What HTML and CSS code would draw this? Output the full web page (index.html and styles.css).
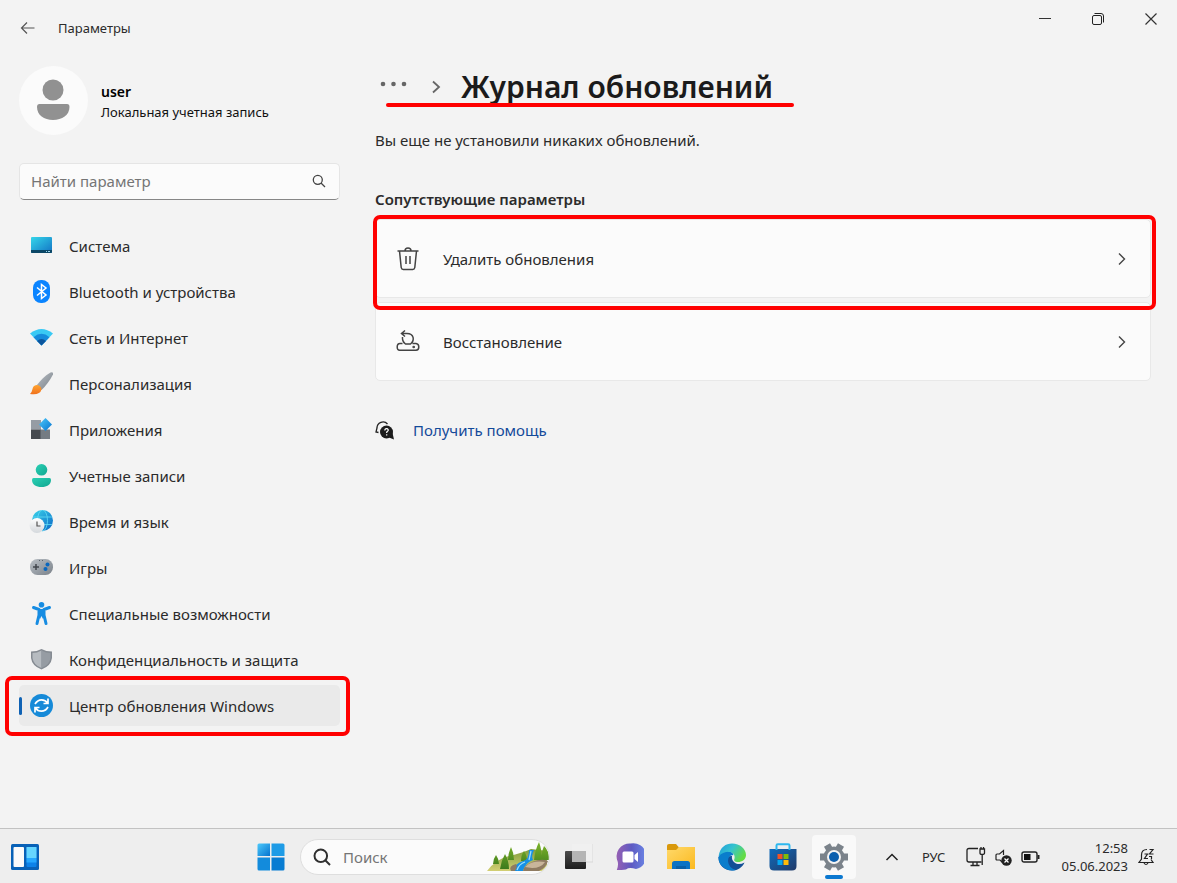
FILE: index.html
```html
<!DOCTYPE html>
<html lang="ru">
<head>
<meta charset="utf-8">
<meta name="viewport" content="width=device-width, initial-scale=1">
<title>Параметры</title>
<link rel="stylesheet" href="styles.css">
</head>
<body>
<svg class="defs" aria-hidden="true">
  <defs>
    <linearGradient id="screen" x1="0" y1="0" x2="1" y2="1"><stop offset="0" stop-color="#35d6ea"/><stop offset="1" stop-color="#1273c4"/></linearGradient>
    <linearGradient id="metal" x1="0" y1="0" x2="1" y2="1"><stop offset="0" stop-color="#b9bfc5"/><stop offset="1" stop-color="#7b828a"/></linearGradient>
    <linearGradient id="orange" x1="0" y1="0" x2="0" y2="1"><stop offset="0" stop-color="#ffa532"/><stop offset="1" stop-color="#f0701c"/></linearGradient>
    <linearGradient id="teal" x1="0" y1="0" x2="1" y2="1"><stop offset="0" stop-color="#2bd0b4"/><stop offset="1" stop-color="#10a791"/></linearGradient>
    <linearGradient id="sky" x1="0" y1="0" x2="1" y2="1"><stop offset="0" stop-color="#4cc9fb"/><stop offset="1" stop-color="#0573cf"/></linearGradient>
    <linearGradient id="globe" x1="0" y1="0" x2="1" y2="1"><stop offset="0" stop-color="#3bd5ea"/><stop offset="1" stop-color="#0a66c6"/></linearGradient>
    <linearGradient id="white" x1="0" y1="0" x2="0" y2="1"><stop offset="0" stop-color="#ffffff"/><stop offset="1" stop-color="#d4d8dc"/></linearGradient>
    <linearGradient id="dark" x1="0" y1="0" x2="0" y2="1"><stop offset="0" stop-color="#4b4b4b"/><stop offset="1" stop-color="#1e1e1e"/></linearGradient>
    <linearGradient id="violet" x1="0" y1="0" x2="1" y2="0"><stop offset="0" stop-color="#9660b4"/><stop offset=".5" stop-color="#5e5ac2"/><stop offset="1" stop-color="#6a86e6"/></linearGradient>
    <linearGradient id="yellow" x1="0" y1="0" x2="1" y2="1"><stop offset="0" stop-color="#ffd96b"/><stop offset="1" stop-color="#fbb91f"/></linearGradient>
    <linearGradient id="edge-top" x1="0" y1="0" x2="1" y2=".5"><stop offset="0" stop-color="#1f9bdc"/><stop offset=".5" stop-color="#35c3cf"/><stop offset="1" stop-color="#64dc45"/></linearGradient>
    <linearGradient id="bag" x1="0" y1="0" x2="1" y2="1"><stop offset="0" stop-color="#0f6cbd"/><stop offset="1" stop-color="#213a68"/></linearGradient>
    <linearGradient id="hill" x1="0" y1="0" x2="0" y2="1"><stop offset="0" stop-color="#7f9c3a"/><stop offset="1" stop-color="#d3cf74"/></linearGradient>
    <linearGradient id="tree" x1="0" y1="0" x2="0" y2="1"><stop offset="0" stop-color="#7fb52a"/><stop offset="1" stop-color="#3b7a1c"/></linearGradient>
  </defs>
</svg>
<div class="window">
  <header class="titlebar">
    <button class="back" aria-label="Назад"><svg width="16" height="14" viewBox="0 0 16 14"><path d="M14.500 7H2M7 1.500L1.500 7L7 12.500" fill="none" stroke="#555" stroke-width="1.200"/></svg></button>
    <span class="app-name">Параметры</span>
    <div class="controls">
      <button aria-label="Свернуть"><svg width="14" height="14"><path d="M1 6.500H13" stroke="#333"/></svg></button>
      <button aria-label="Восстановить окно"><svg width="14" height="14" fill="none" stroke="#222"><rect x="1.500" y="3.500" width="9" height="9" rx="1.500"/><path d="M3.500 1.500H10Q12.500 1.500 12.500 4V10.500"/></svg></button>
      <button aria-label="Закрыть"><svg width="14" height="14"><path d="M1.500 1.500L12.500 12.500M12.500 1.500L1.500 12.500" stroke="#333" stroke-width="1.200"/></svg></button>
    </div>
  </header>
  <div class="layout">
    <aside class="sidebar">
      <div class="account">
        <svg class="avatar" width="69" height="69" viewBox="0 0 69 69"><circle cx="34.500" cy="34.500" r="34.500" fill="#fbfbfb"/><circle cx="34" cy="24" r="10.500" fill="#919191"/><path d="M20.500 38H48Q50.500 38 50.500 41C50.500 49 43 54 34 54S18 49 18 41Q18 38 20.500 38Z" fill="#919191"/></svg>
        <div><div class="user-name">user</div><div class="user-type">Локальная учетная запись</div></div>
      </div>
      <div class="search">
        <input type="text" placeholder="Найти параметр" aria-label="Найти параметр">
        <svg width="14" height="14" viewBox="0 0 14 14" fill="none" stroke="#444" stroke-width="1.300"><circle cx="5.800" cy="5.800" r="4.500"/><path d="M9 9L13 13"/></svg>
      </div>
      <nav class="nav">
        <a href="#"><svg width="24" height="24"><rect x="2" y="3" width="21" height="16" rx="1" fill="url(#screen)"/><path d="M2 16H23V18Q23 19 22 19H3Q2 19 2 18Z" fill="#0b4766"/><path d="M17 17.500H18M19 17.500H21" stroke="#9ed7ee"/></svg>Система</a>
        <a href="#"><svg width="24" height="24"><rect x="4" y="0" width="17" height="23" rx="8" fill="#0a84ff"/><path d="M8 7.500L17 15L12.500 18.500V4.500L17 8L8 15.500" fill="none" stroke="#fff" stroke-width="1.500"/></svg>Bluetooth и устройства</a>
        <a href="#"><svg width="24" height="24"><path d="M1 7.500Q12.500 -1.500 24 7.500L12.500 19.500Z" fill="#39c9f4"/><path d="M4.500 11.200Q12.500 4.500 20.500 11.200L12.500 19.500Z" fill="#158bdc"/><path d="M8 15Q12.500 11 17 15L12.500 19.500Z" fill="#0b559d"/></svg>Сеть и Интернет</a>
        <a href="#"><svg width="24" height="24"><path d="M7.500 13.500Q15 4 21.500 .5Q24.500 -.5 24 2.500Q19 12 12.500 18Z" fill="url(#metal)"/><path d="M7.500 13Q12 13 12.500 17.500Q11 23.500 1 22Q3 20 3.500 17Q4 13.500 7.500 13Z" fill="url(#orange)"/></svg>Персонализация</a>
        <a href="#"><svg width="24" height="24"><rect x="2" y="2" width="10" height="9.500" fill="#969ca4"/><rect x="2" y="11.500" width="10" height="9.500" fill="#45494e"/><rect x="11.500" y="11.500" width="9.500" height="9.500" fill="#757c83"/><path d="M16.500 0L23 6.500L16.500 13L10 6.500Z" fill="url(#sky)"/></svg>Приложения</a>
        <a href="#"><svg width="24" height="24"><circle cx="12.500" cy="5.800" r="5.800" fill="url(#teal)"/><path d="M4.500 14H20.500Q22 14 22 16C22 20.500 18 23 12.500 23S3 20.500 3 16Q3 14 4.500 14Z" fill="url(#teal)"/></svg>Учетные записи</a>
        <a href="#"><svg width="24" height="24"><circle cx="13.500" cy="10.500" r="10.500" fill="url(#globe)"/><g fill="none" stroke="#62dcf5" stroke-width=".8"><ellipse cx="13.500" cy="10.500" rx="5" ry="10.500"/><path d="M4 7H23M4 14.500H23"/></g><circle cx="8" cy="15.500" r="7.500" fill="url(#white)"/><path d="M8 11.500V16H11.500" fill="none" stroke="#555" stroke-width="1.200"/></svg>Время и язык</a>
        <a href="#"><svg width="24" height="24"><rect x="1" y="3" width="23" height="16" rx="7.500" fill="url(#metal)"/><path d="M4 11H10M7 8V14" stroke="#41474d" stroke-width="1.500"/><path d="M10 4.500H11M13 4.500H14" stroke="#59616a"/><circle cx="18.500" cy="8.500" r="2" fill="#0b67bd"/><circle cx="16.500" cy="13" r="2" fill="#0b67bd"/></svg>Игры</a>
        <a href="#"><svg width="24" height="24"><circle cx="12.500" cy="2.800" r="2.800" fill="#168ce2"/><path d="M4.500 5.500L10 7.500V13L8 21.500M20.500 5.500L15 7.500V13L17 21.500" fill="none" stroke="#168ce2" stroke-width="3" stroke-linecap="round" stroke-linejoin="round"/><path d="M9 7H16V14L14 17L12.500 14L11 17L9 14Z" fill="#168ce2"/></svg>Специальные возможности</a>
        <a href="#"><svg width="24" height="24"><path d="M12.500 1Q17 3.500 23 3.500V10Q22 18 12.500 21.500Q3 18 2 10V3.500Q8 3.500 12.500 1Z" fill="#858b92"/><path d="M12.500 2.500V20Q4.500 17 3.500 10V5Q8 5 12.500 2.500Z" fill="#b6bbc0"/><path d="M12.500 2.500V20Q20.500 17 21.500 10V5Q17 5 12.500 2.500Z" fill="#969ca3"/></svg>Конфиденциальность и защита</a>
        <a href="#" class="current" aria-current="page"><svg width="24" height="24"><circle cx="12.500" cy="11.500" r="11.500" fill="#168ad8"/><g fill="none" stroke="#fff" stroke-width="1.700"><path d="M6 10Q8.500 5.800 12.500 5.800T18.500 9M19 4.500V9.500H14.500M19 13Q16.500 17.200 12.500 17.200T6.500 14M6 18.500V13.500H10.500"/></g></svg>Центр обновления Windows</a>
      </nav>
    </aside>
    <main class="content">
      <div class="crumbs">
        <button class="more" aria-label="Другие разделы"><svg width="27" height="6" fill="#666"><circle cx="3" cy="3" r="2.300"/><circle cx="13.500" cy="3" r="2.300"/><circle cx="24" cy="3" r="2.300"/></svg></button>
        <svg class="crumb-sep" width="10" height="14"><path d="M2 1.500L8 7L2 12.500" fill="none" stroke="#666" stroke-width="1.800"/></svg>
        <h1>Журнал обновлений</h1>
      </div>
      <p class="status">Вы еще не установили никаких обновлений.</p>
      <h2>Сопутствующие параметры</h2>
      <div class="cards">
        <a href="#" class="card marked"><svg width="24" height="26" viewBox="0 0 24 26" fill="none" stroke="#444" stroke-width="1.500"><path d="M1.500 5H22.500M9 5Q9 2 12 2T15 5M3.500 5L5.200 21.500Q5.500 23.500 7.300 23.500H16.700Q18.500 23.500 18.800 21.500L20.500 5M10 10V18M14 10V18"/></svg><span>Удалить обновления</span><svg class="chevron" width="10" height="14"><path d="M2 1.500L7.500 7L2 12.500" fill="none" stroke="#444" stroke-width="1.400"/></svg></a>
        <a href="#" class="card"><svg width="24" height="26" viewBox="0 0 24 26" fill="none" stroke="#444" stroke-width="1.500"><path d="M6.500 14.500H4Q1.200 14.500 1.200 18T4 21.200H20Q22.800 21.200 22.800 18T20 14.500H16.500M9 1.500L5.500 4.500L9 7.500M5.500 4.500H11C18 4.500 19 11.500 14.500 15H9.500Q6 12.500 6.500 8"/><circle cx="17.700" cy="18" r=".6"/></svg><span>Восстановление</span><svg class="chevron" width="10" height="14"><path d="M2 1.500L7.500 7L2 12.500" fill="none" stroke="#444" stroke-width="1.400"/></svg></a>
      </div>
      <a href="#" class="help"><svg width="20" height="20"><path d="M3.500 12.500L1 12L2 8A6 6 0 0 1 12.500 4" fill="none" stroke="#222" stroke-width="1.300"/><circle cx="11.500" cy="12" r="6.500" fill="#1b1b1b"/><path d="M14 17.500L19 19.500L17.500 13Z" fill="#1b1b1b"/><path d="M9.800 10.500Q10 8.500 11.700 8.700Q13.600 9 13.200 10.600Q12.900 11.300 11.700 12V13M11.700 14.200V15.500" fill="none" stroke="#fff" stroke-width="1.200"/></svg><span>Получить помощь</span></a>
    </main>
  </div>
</div>
<footer class="taskbar">
  <div class="task-left"><button aria-label="Виджеты"><svg width="28" height="26"><rect width="28" height="26" rx="1.500" fill="#0861b7"/><rect x="2.500" y="3" width="10.500" height="20" rx="1" fill="#fafafa"/><rect x="15.500" y="3" width="10" height="20" rx="1" fill="#0c82e9"/><path d="M15.500 3H25.500V14H15.500Z" fill="#66d6ff"/><path d="M15.500 14H25.500V18.500H15.500Z" fill="#25a8ff"/></svg></button></div>
  <div class="task-center">
    <button class="start" aria-label="Пуск"><svg width="28" height="28" fill="url(#sky)"><path d="M2 .5H13V13H.5V2Q.5 .5 2 .5Z"/><path d="M14.500 .5H26Q27.500 .5 27.500 2V13H14.500Z" fill="#1e9be6"/><path d="M.5 14.500H13V27.500H2Q.5 27.500 .5 26Z" fill="#138bdc"/><path d="M14.500 14.500H27.500V26Q27.500 27.500 26 27.500H14.500Z" fill="#087cd2"/></svg></button>
    <div class="task-search">
      <svg width="18" height="18" fill="none" stroke="#303030" stroke-width="2"><circle cx="7.800" cy="7.800" r="6.300"/><path d="M12 12L17 17"/></svg>
      <input type="text" placeholder="Поиск" aria-label="Поиск">
      <svg class="landscape" width="62" height="30"><path d="M0 29Q9 17 22 14T44 7L60 9V29Z" fill="url(#hill)"/><g fill="url(#tree)"><path d="M9 13Q12 17 12 22H6Q6 17 9 13ZM24 5Q27 11 27 18H21Q21 11 24 5ZM52 0Q55 8 55 18H47Q48 8 52 0ZM57 4Q62 8 62 18H55Q54 10 57 4ZM37 9Q40 13 40 19H34Q34 13 37 9ZM18 12Q22 19 22 27H13Q14 19 18 12Z"/></g><path d="M42 8H47Q44 14 46 18Q38 21 36 29H26Q27 22 36 19Q42 18 42 8Z" fill="#1690e6"/><path d="M44 9L42 18M38 20Q32 22 30 28" fill="none" stroke="#9adfff" stroke-width="1.300"/><path d="M36 29Q37 23 45 20Q55 16 61 19Q59 26 52 29ZM24 29Q21 24 29 22Q31 24 28 29Z" fill="#8f7b62"/><path d="M38 25Q45 18 58 20Q54 26 45 26Z" fill="#c9b59a"/></svg>
    </div>
    <button class="task-icon" aria-label="Представление задач"><svg width="28" height="28"><rect x="0" y="8" width="21" height="18" rx="1" fill="url(#dark)"/><rect x="7" y="1" width="21" height="18" fill="#f0f0f0"/><path d="M7 8H21V19H7Z" fill="#b5b5b5"/><path d="M21 19H28V1" fill="none" stroke="#d8d8d8"/></svg></button>
    <button class="task-icon" aria-label="Чат"><svg width="28" height="28"><path d="M14.500 .5A13 13 0 0 1 20 26Q13 24 10 26.500Q6 27 .8 27Q2.500 23 1.800 19A13 13 0 0 1 14.500 .5Z" fill="url(#violet)"/><rect x="6.500" y="8.500" width="11" height="11" rx="1.500" fill="#fff"/><path d="M18.500 12L22 9V19L18.500 16Z" fill="#fff"/></svg></button>
    <button class="task-icon" aria-label="Проводник"><svg width="28" height="28"><path d="M0 2.500Q0 1 2 1H9L12 4.500V10H0Z" fill="#d9980b"/><path d="M0 7H9L12 4H28V26H0Z" fill="url(#yellow)"/><path d="M5 26V20.500Q5 18 7.500 18H20.500Q23 18 23 20.500V26Z" fill="#0b73c4"/><path d="M9 26V23H19V26Z" fill="#0960a7"/></svg></button>
    <button class="task-icon" aria-label="Браузер"><svg width="28" height="28"><path d="M.5 14C.5 22 6 27.500 14 27.500C20 27.500 24.500 24 26.500 19.500Q22 22 18 20.500Q13 18 14 13Z" fill="#134f96"/><path d="M.5 14Q2 8 9 8Q15 8.500 15.500 12Q10 12 10 18Q10.500 25 18 27Q12 28.500 7 25.500Q0 21 .5 14Z" fill="#0a7dcc"/><path d="M.6 13C2 4 8 .5 14 .5C22 .5 28 6 28 12C28 16.500 24 19 20 19C16.500 19 15.500 17.500 16.500 15.500C18 10 10 5 .6 13Z" fill="url(#edge-top)"/></svg></button>
    <button class="task-icon" aria-label="Магазин"><svg width="28" height="28"><path d="M.5 6H27.500V23Q27.500 27.500 23 27.500H5Q.5 27.500 .5 23Z" fill="url(#bag)"/><path d="M7.500 7V2.500Q7.500 1.300 8.800 1.300H19.200Q20.500 1.300 20.500 2.500V7" fill="none" stroke="#2eb8ef" stroke-width="2"/><path d="M8.500 11H13.500V16H8.500Z" fill="#f15324"/><path d="M14.500 11H19.500V16H14.500Z" fill="#80bb0a"/><path d="M8.500 17H13.500V22H8.500Z" fill="#05a6f0"/><path d="M14.500 17H19.500V22H14.500Z" fill="#ffba08"/></svg></button>
    <button class="task-icon active" aria-label="Параметры"><svg width="28" height="28"><path d="M0 14H28M7 2L21 26M21 2L7 26" stroke="#7b838b" stroke-width="7"/><circle cx="14" cy="14" r="10.500" fill="#7b838b"/><circle cx="14" cy="14" r="7" fill="#f4f4f4"/><circle cx="14" cy="14" r="5" fill="#0b5fae"/></svg></button>
  </div>
  <div class="tray">
    <button class="tray-more" aria-label="Скрытые значки"><svg width="14" height="10"><path d="M1.500 8L7 2.500L12.500 8" fill="none" stroke="#222" stroke-width="1.500"/></svg></button>
    <span class="lang">РУС</span>
    <button class="status-icons" aria-label="Сеть, звук, батарея">
      <svg width="20" height="20" fill="none" stroke="#222" stroke-width="1.300"><path d="M12 1.500H3Q1 1.500 1 3.500V13Q1 15 3 15H15.500M7 15V18M11 15V18M4.500 18.500H13.500"/><path d="M14 2H18.500V6Q18.500 7.500 16.200 7.500T14 6ZM16.200 7.500V18M15 0V2M17.500 0V2"/></svg>
      <svg width="17" height="18"><path d="M8 15L5 12H2Q1 12 1 11V7Q1 6 2 6H4.500L8.500 2.500V7" fill="none" stroke="#222" stroke-width="1.200"/><circle cx="11.500" cy="12.500" r="5.200" fill="#222"/><path d="M9.500 10.500L13.500 14.500M13.500 10.500L9.500 14.500" stroke="#fff" stroke-width="1.200"/></svg>
      <svg width="19" height="14"><rect x="1" y="2" width="15" height="10" rx="2" fill="none" stroke="#222" stroke-width="1.400"/><rect x="3" y="4" width="6.500" height="6" fill="#111"/><path d="M17.500 5V9" stroke="#222" stroke-width="2"/></svg>
    </button>
    <time class="clock" datetime="2023-06-05T12:58"><span>12:58</span><span>05.06.2023</span></time>
    <button aria-label="Уведомления"><svg width="17" height="18" fill="none" stroke="#222" stroke-width="1.200"><path d="M9 1.500Q3.500 1.500 3.500 7V11L1 14.500H15L13 11.500M6 15Q8 18 10 15"/><path d="M6.500 6H9.500L6.500 10.500H10M11.500 1.500H15L11.500 6H15.500M11 8.500H13.500V11"/></svg></button>
  </div>
</footer>
</body>
</html>
```
FILE: styles.css
```css
* { box-sizing: border-box; }

body {
  margin: 0;
  min-height: 100vh;
  display: flex;
  flex-direction: column;
  background: #f3f3f3;
  color: #2b2b2b;
  font: 15px/20px "Noto Sans", "Open Sans", sans-serif;
}

svg { flex: none; display: block; }
button { border: 0; padding: 0; background: none; display: flex; align-items: center; justify-content: center; }
input { border: 0; padding: 0; outline: 0; background: none; font: inherit; min-width: 0; }
input::placeholder { color: #757575; opacity: 1; }
a { color: inherit; text-decoration: none; }
h1, h2, p { margin: 0; }

.defs { position: absolute; width: 0; height: 0; }

.window { flex: 1; }

/* Title bar */
.titlebar { display: flex; align-items: flex-start; height: 66px; padding-left: 20px; }
.back { width: 16px; height: 56px; }
.app-name { margin-left: 22px; font-size: 13px; line-height: 57px; }
.controls { display: flex; margin-left: auto; }
.controls button { width: 53px; height: 37px; }

.layout { display: flex; gap: 35px; padding: 0 26px 0 19px; }

/* Sidebar */
.sidebar { flex: none; width: 321px; }
.account { display: flex; align-items: center; gap: 13px; line-height: 21px; }
.user-name { padding-top: 2px; font-size: 14px; font-weight: 600; color: #000; }
.user-type { font-size: 13px; color: #111; }

.search {
  display: flex;
  align-items: center;
  height: 37px;
  margin-top: 28px;
  padding: 0 13px 2px 11px;
  background: #fbfbfb;
  border: 1px solid #e5e5e5;
  border-bottom-color: #868686;
  border-radius: 5px;
}
.search input { flex: 1; }

.nav { display: flex; flex-direction: column; gap: 5px; margin-top: 25px; }
.nav a { position: relative; display: flex; align-items: center; gap: 16px; height: 41px; padding: 0 10px; border-radius: 5px; }
.nav .current { background: #eaeaea; }
.nav .current::before { content: ""; position: absolute; left: 0; top: 12px; width: 3px; height: 18px; border-radius: 2px; background: #0f62b4; }
.nav .current::after { content: ""; position: absolute; inset: -9px -10px -10px -14px; border: 4px solid #f00; border-radius: 7px; }

/* Content */
.content { flex: 1; min-width: 0; }
.crumbs { position: relative; display: flex; align-items: center; width: max-content; height: 41px; padding-left: 5px; }
.crumbs::after { content: ""; position: absolute; left: 11px; right: -21px; bottom: 0; height: 4px; border-radius: 2px; background: #f00; }
.more { height: 36px; align-self: flex-start; }
.crumb-sep { margin: 0 20px 0 24px; }
h1 { font-size: 30px; line-height: 40px; font-weight: 600; color: #1b1b1b; }
.status { margin-top: 23px; }
h2 { margin-top: 39px; font-size: 15px; line-height: 20px; font-weight: 600; }

.cards { display: flex; flex-direction: column; gap: 4px; margin-top: 10px; }
.card {
  position: relative;
  display: flex;
  align-items: center;
  gap: 23px;
  height: 79px;
  padding: 0 23px 0 20px;
  background: #fbfbfb;
  border: 1px solid #e8e8e8;
  border-radius: 5px;
}
.card .chevron { margin-left: auto; }
.marked::after { content: ""; position: absolute; z-index: 1; inset: -5px -6px -13px -3px; border: 4px solid #f00; border-radius: 7px; }

.help { display: inline-flex; align-items: center; gap: 18px; margin-top: 39px; color: #134a9a; }

/* Taskbar */
.taskbar { display: flex; align-items: center; height: 55px; padding-top: 1px; background: #eee; border-top: 1px solid #c2c2c2; }
.task-left { flex: 1; padding-left: 11px; }
.task-center { display: flex; align-items: center; gap: 7px; }
.start { margin-right: 8px; }
.task-search { display: flex; align-items: center; width: 250px; height: 36px; padding-left: 12px; gap: 12px; background: #fbfbfb; border: 1px solid #dedede; border-radius: 18px; overflow: hidden; }
.task-search input { flex: 1; }
.task-icon { position: relative; width: 44px; height: 44px; border-radius: 4px; }
.active { background: #f9f9f9; }
.active::after { content: ""; position: absolute; left: 13px; bottom: 0; width: 18px; height: 4px; border-radius: 2px; background: #0b78d0; }

.tray { display: flex; align-items: center; width: 321px; padding: 0 22px 0 29px; }
.lang { margin-left: 23px; font-size: 13px; }
.status-icons { gap: 9px; margin-left: 21px; }
.clock { display: flex; flex-direction: column; align-items: flex-end; margin-left: auto; margin-right: 10px; font-size: 13px; line-height: 18px; }
```
